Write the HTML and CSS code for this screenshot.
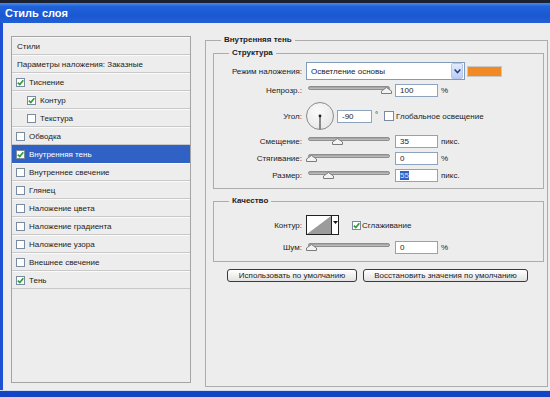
FILE: index.html
```html
<!DOCTYPE html>
<html lang="ru">
<head>
    <meta charset="UTF-8">
    <title>Стиль слоя</title>
    <link rel="stylesheet" href="styles.css">
</head>
<body>
    <div class="window">
        <div class="titlebar">Стиль слоя</div>
        <div class="main">
            <div class="content">
                <!-- список эффектов -->
                <div class="layers">
                    <div class="layer-row plain">Стили</div>
                    <div class="layer-row plain">Параметры наложения: Заказные</div>
                    <div class="layer-row"><span class="check on"><svg viewBox="0 0 7 7" width="7" height="7"><path d="M0.8 3.6 L2.8 5.6 L6.3 1.2" /></svg></span>Тиснение</div>
                    <div class="layer-row sub"><span class="check on"><svg viewBox="0 0 7 7" width="7" height="7"><path d="M0.8 3.6 L2.8 5.6 L6.3 1.2" /></svg></span>Контур</div>
                    <div class="layer-row sub"><span class="check"></span>Текстура</div>
                    <div class="layer-row"><span class="check"></span>Обводка</div>
                    <div class="layer-row active"><span class="check on"><svg viewBox="0 0 7 7" width="7" height="7"><path d="M0.8 3.6 L2.8 5.6 L6.3 1.2" /></svg></span>Внутренняя тень</div>
                    <div class="layer-row"><span class="check"></span>Внутреннее свечение</div>
                    <div class="layer-row"><span class="check"></span>Глянец</div>
                    <div class="layer-row"><span class="check"></span>Наложение цвета</div>
                    <div class="layer-row"><span class="check"></span>Наложение градиента</div>
                    <div class="layer-row"><span class="check"></span>Наложение узора</div>
                    <div class="layer-row"><span class="check"></span>Внешнее свечение</div>
                    <div class="layer-row"><span class="check on"><svg viewBox="0 0 7 7" width="7" height="7"><path d="M0.8 3.6 L2.8 5.6 L6.3 1.2" /></svg></span>Тень</div>
                </div>

                <fieldset class="effect">
                    <legend>Внутренняя тень</legend>

                    <fieldset class="section structure">
                        <legend>Структура</legend>
                        <div class="row mode">
                            <span class="label">Режим наложения:</span>
                            <div class="select">
                                <span class="select-text">Осветление основы</span>
                                <span class="select-btn"><svg width="7" height="5" viewBox="0 0 7 5"><path d="M0.6 0.6 L3.5 3.6 L6.4 0.6" /></svg></span>
                            </div>
                            <span class="swatch"></span>
                        </div>
                        <div class="row">
                            <span class="label">Непрозр.:</span>
                            <div class="slider"><div class="track"></div><span class="thumb" style="left: 75px;"><svg width="11" height="7" viewBox="0 0 11 7"><path d="M0.5 6.5 V4 L5.5 0.5 L10.5 4 V6.5 Z" /></svg></span></div>
                            <span class="field">100</span>
                            <span class="unit">%</span>
                        </div>
                        <div class="row angle">
                            <span class="label">Угол:</span>
                            <div class="dial"><svg width="26" height="26" viewBox="0 0 26 26"><line x1="13" y1="13" x2="13" y2="26" /><circle cx="13" cy="13" r="1.4" /></svg></div>
                            <span class="field narrow">-90</span>
                            <span class="deg">°</span>
                            <span class="check big"></span>
                            <span class="check-label">Глобальное освещение</span>
                        </div>
                        <div class="row">
                            <span class="label">Смещение:</span>
                            <div class="slider"><div class="track"></div><span class="thumb" style="left: 26px;"><svg width="11" height="7" viewBox="0 0 11 7"><path d="M0.5 6.5 V4 L5.5 0.5 L10.5 4 V6.5 Z" /></svg></span></div>
                            <span class="field">35</span>
                            <span class="unit">пикс.</span>
                        </div>
                        <div class="row">
                            <span class="label">Стягивание:</span>
                            <div class="slider"><div class="track"></div><span class="thumb" style="left: 0px;"><svg width="11" height="7" viewBox="0 0 11 7"><path d="M0.5 6.5 V4 L5.5 0.5 L10.5 4 V6.5 Z" /></svg></span></div>
                            <span class="field">0</span>
                            <span class="unit">%</span>
                        </div>
                        <div class="row">
                            <span class="label">Размер:</span>
                            <div class="slider"><div class="track"></div><span class="thumb" style="left: 17px;"><svg width="11" height="7" viewBox="0 0 11 7"><path d="M0.5 6.5 V4 L5.5 0.5 L10.5 4 V6.5 Z" /></svg></span></div>
                            <span class="field"><span class="selected">55</span></span>
                            <span class="unit">пикс.</span>
                        </div>
                    </fieldset>

                    <fieldset class="section quality">
                        <legend>Качество</legend>
                        <div class="row contour-row">
                            <span class="label">Контур:</span>
                            <div class="contour">
                                <span class="contour-preview"><svg width="24" height="18" viewBox="0 0 24 18"><polygon points="0,18 24,0 24,18" /></svg></span>
                                <span class="contour-drop"><svg width="5" height="3" viewBox="0 0 5 3"><polygon points="0,0 5,0 2.5,3" /></svg></span>
                            </div>
                            <span class="check on smooth"><svg viewBox="0 0 7 7" width="7" height="7"><path d="M0.8 3.6 L2.8 5.6 L6.3 1.2" /></svg></span>
                            <span class="check-label tight">Сглаживание</span>
                        </div>
                        <div class="row noise">
                            <span class="label">Шум:</span>
                            <div class="slider"><div class="track"></div><span class="thumb" style="left: 0px;"><svg width="11" height="7" viewBox="0 0 11 7"><path d="M0.5 6.5 V4 L5.5 0.5 L10.5 4 V6.5 Z" /></svg></span></div>
                            <span class="field">0</span>
                            <span class="unit">%</span>
                        </div>
                    </fieldset>

                    <div class="buttons">
                        <button class="btn default">Использовать по умолчанию</button>
                        <button class="btn reset">Восстановить значения по умолчанию</button>
                    </div>
                </fieldset>
            </div>
        </div>
        <div class="frame-bottom"></div>
    </div>
</body>
</html>
```

FILE: styles.css
```css
* {
    margin: 0;
    padding: 0;
    box-sizing: border-box;
}

body {
    width: 550px;
    height: 397px;
    overflow: hidden;
    font-family: "Liberation Sans", Arial, sans-serif;
    font-size: 8px;
    color: #1c1c1c;
    background: #ededed;
}

.window {
    height: 397px;
    display: flex;
    flex-direction: column;
    border-top: 3px solid #1a2130;
}

.titlebar {
    height: 20px;
    padding-left: 5px;
    line-height: 20px;
    font-size: 11px;
    font-weight: bold;
    color: #fff;
    background: linear-gradient(180deg, #4a88ee 0%, #2062da 18%, #1a58d2 65%, #2360d6 100%);
}

.main {
    flex: 1;
    display: flex;
    border-left: 3px solid #1d50d4;
}

.content {
    flex: 1;
    display: flex;
    align-items: flex-start;
    padding: 12px 0 0 8px;
    background: #ededed;
}

.frame-bottom {
    height: 7px;
    border-top: 1px solid #cfdaf0;
    background: #1244c6;
}

/* левый список */
.layers {
    width: 180px;
    height: 347px;
    margin-top: 1px;
    border: 1px solid #a4a4a4;
    background: #ededed;
}

.layer-row {
    height: 18px;
    display: flex;
    align-items: center;
    padding-left: 4px;
    border-top: 1px solid #fafafa;
    border-bottom: 1px solid #c8c8c8;
    white-space: nowrap;
}

.layer-row.plain {
    padding-left: 5px;
}

.layer-row.sub {
    padding-left: 15px;
}

.layer-row.active {
    background: #2f62c4;
    border-color: #2f62c4;
    color: #fff;
}

.check {
    flex: none;
    width: 9px;
    height: 9px;
    margin-right: 4px;
    border: 1px solid #7a8aa0;
    background: #fff;
    display: flex;
    align-items: center;
    justify-content: center;
}

.check svg path {
    fill: none;
    stroke: #2e9a34;
    stroke-width: 1.6;
}

/* правая часть */
fieldset {
    border: 1px solid #acacac;
    min-inline-size: 0;
}

legend {
    font-weight: bold;
    line-height: 10px;
    padding: 0 3px;
}

.effect {
    width: 343px;
    height: 352px;
    margin-left: 14px;
    padding: 3px 3px 0 7px;
}

.effect > legend {
    margin-left: 8px;
}

.section {
    width: 331px;
}

.section > legend {
    margin-left: 15px;
}

.structure {
    padding: 4px 0 6px 0;
}

.quality {
    margin-top: 7px;
    padding: 9px 0 7px 0;
}

.row {
    display: flex;
    align-items: center;
    height: 13px;
    margin-top: 4px;
    white-space: nowrap;
}

.row:first-of-type {
    margin-top: 0;
}

.row.mode {
    height: 18px;
}

.row.angle {
    height: 30px;
}

.row.contour-row {
    height: 20px;
}

.row.noise {
    margin-top: 6px;
}

.label {
    flex: none;
    width: 88px;
    margin-right: 4px;
    text-align: right;
}

.select {
    width: 159px;
    height: 18px;
    display: flex;
    align-items: center;
    border: 1px solid #7f9db9;
    background: #fff;
}

.select-text {
    flex: 1;
    padding-left: 4px;
}

.select-btn {
    width: 12px;
    height: 16px;
    margin-right: 1px;
    display: flex;
    align-items: center;
    justify-content: center;
    border: 1px solid #b4c6ea;
    border-radius: 2px;
    background: linear-gradient(180deg, #e2ebfd, #bccdf3);
}

.select-btn path {
    fill: none;
    stroke: #26407c;
    stroke-width: 1.5;
}

.swatch {
    width: 35px;
    height: 11px;
    margin-left: 2px;
    background: #f18a22;
    border: 1px solid #c8c8c8;
}

.slider {
    position: relative;
    flex: none;
    width: 85px;
    height: 13px;
    margin-right: 4px;
    padding: 2px 1px 0 2px;
}

.track {
    height: 4px;
    border: 1px solid #8e8e8e;
    border-radius: 2px;
    background: linear-gradient(180deg, #9c9c9c, #c4c4c4);
}

.thumb {
    position: absolute;
    top: 3px;
    width: 11px;
    height: 7px;
    display: flex;
}

.thumb path {
    fill: #f3f3f3;
    stroke: #7c7c7c;
}

.field {
    flex: none;
    width: 43px;
    height: 13px;
    padding-left: 4px;
    line-height: 11px;
    border: 1px solid #8ea3be;
    background: #fff;
}

.field.narrow {
    width: 35px;
    margin-right: 3px;
}

.selected {
    background: #2f62c4;
    color: #d8e6ff;
}

.unit {
    margin-left: 3px;
}

.dial {
    flex: none;
    width: 28px;
    height: 28px;
    margin-right: 3px;
    border: 1px solid #8a8a8a;
    border-radius: 50%;
    background: radial-gradient(circle at 40% 35%, #fbfbfb, #e2e2e2);
    display: flex;
}

.dial line {
    stroke: #222;
    stroke-width: 1;
}

.dial circle {
    fill: #222;
}

.deg {
    width: 3px;
    margin-right: 6px;
    align-self: flex-start;
    margin-top: 9px;
}

.check.big {
    width: 10px;
    height: 10px;
    margin-right: 2px;
}

.check-label.tight {
    margin-left: -3px;
}

.contour {
    flex: none;
    width: 33px;
    height: 20px;
    display: flex;
    border: 1px solid #222;
    background: #fff;
}

.contour-preview {
    width: 24px;
    display: flex;
}

.contour-preview polygon {
    fill: #9b9b9b;
}

.contour-drop {
    width: 7px;
    border-left: 1px solid #222;
    display: flex;
    justify-content: center;
    padding-top: 5px;
}

.contour-drop polygon {
    fill: #111;
}

.check.smooth {
    margin-left: 13px;
}

.buttons {
    display: flex;
    gap: 6px;
    margin-top: 7px;
    padding-left: 14px;
}

.btn {
    height: 13px;
    font-family: "Liberation Sans", Arial, sans-serif;
    font-size: 8px;
    line-height: 11px;
    color: #1c1c1c;
    border: 1px solid #3a3a3a;
    border-radius: 3px;
    background: linear-gradient(180deg, #ffffff, #e2e2e2);
}

.btn.default {
    width: 130px;
}

.btn.reset {
    width: 165px;
}
```
